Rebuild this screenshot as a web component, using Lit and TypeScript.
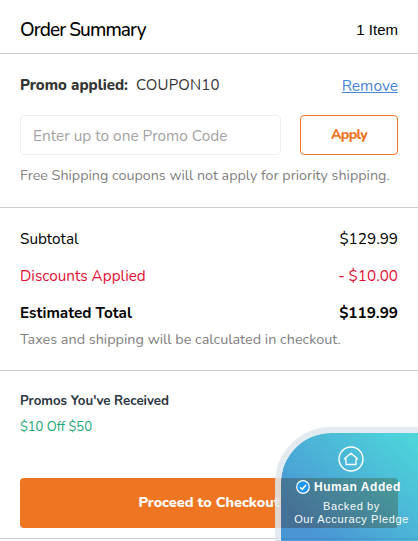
import { LitElement, html, css } from "lit";
import { customElement } from "lit/decorators.js";

@customElement("app-root")
export class AppRoot extends LitElement {
  static styles = css`
    :host { display: block; position: relative; width: 418px; height: 541px; overflow: hidden; background: #fff; font-family: "Nunito", "Lato", "Open Sans", sans-serif; color: #000; }
    .head { box-sizing: border-box; border-bottom: 1px solid #ccc; display: flex; justify-content: space-between; align-items: center; padding: 6px 20px 0; height: 54px; }
    .title { font-size: 19px; font-weight: 500; letter-spacing: -0.9px; }
    .count { font-family: "Liberation Sans", sans-serif; font-size: 15px; }
    .promo { height: 154px; box-sizing: border-box; border-bottom: 1px solid #ccc; padding: 20px 20px 0; }
    .applied { display: flex; justify-content: space-between; align-items: center; font-size: 15px; color: #333; height: 22px; }
    .applied b { font-weight: 800; margin-right: 4px; }
    .coupon { letter-spacing: 0.2px; }
    .remove { color: #4a86d8; text-decoration: underline; font-size: 15.5px; }
    .form { display: flex; justify-content: space-between; margin-top: 19px; }
    .input { width: 261px; height: 40px; box-sizing: border-box; border: 1px solid #eee; border-radius: 4px; padding: 1px 0 0 12px; display: flex; align-items: center; font-size: 15.4px; color: #a3a3a3; }
    .apply { width: 98px; height: 40px; box-sizing: border-box; border: 1px solid #ee7623; border-radius: 4px; background: #fff; color: #ee7623; font-size: 14px; font-weight: 800; letter-spacing: -0.7px; display: flex; align-items: center; justify-content: center; padding-bottom: 1px; }
    .note { font-size: 14.3px; color: #808080; margin-top: 11px; line-height: 20px; }
    .totals { height: 163px; box-sizing: border-box; border-bottom: 1px solid #ccc; padding: 20px 20px 0; }
    .row { display: flex; justify-content: space-between; align-items: center; height: 22px; font-size: 15.3px; margin-bottom: 15px; }
    .row.red { color: #e01134; }
    .row.total { font-weight: 700; margin-bottom: 5px; }
    .taxes { font-size: 14.4px; color: #808080; line-height: 20px; }
    .received { padding: 21px 20px 0; height: 107px; box-sizing: border-box; }
    .received h3 { margin: 0; font-size: 13.3px; font-weight: 700; color: #2b3440; line-height: 18px; }
    .received p { margin: 8px 0 0; font-size: 13px; color: #14a877; line-height: 18px; }
    .cta { margin: 0 20px; height: 50px; box-sizing: border-box; padding-bottom: 2px; border-radius: 4px; background: #ee7623; color: #fff; display: flex; align-items: center; justify-content: center; font-size: 14.4px; font-weight: 800; }
    .rule { border-top: 1px solid #ccc; margin-top: 10px; }
    .badge { position: absolute; left: 275px; top: 427px; width: 170px; height: 140px; box-sizing: border-box; border: 6px solid rgba(222, 232, 239, 0.85); border-radius: 56px 0 0 0; background: linear-gradient(222deg, rgba(8, 210, 205, 0.72), rgba(5, 110, 195, 0.72) 78%); background-clip: padding-box; font-family: "Liberation Sans", sans-serif; color: #fff; }
    .home { position: absolute; left: 57px; top: 13px; }
    .human { position: absolute; left: 15px; top: 47px; display: flex; align-items: center; gap: 4px; font-size: 12px; font-weight: 700; letter-spacing: 0.55px; white-space: nowrap; }
    .backed { position: absolute; left: 0; width: 141px; top: 67px; text-align: center; font-size: 11px; line-height: 13px; letter-spacing: 0.6px; white-space: nowrap; color: #f6fafb; }
  `;

  render() {
    return html`
      <div class="head"><span class="title">Order Summary</span><span class="count">1 Item</span></div>
      <div class="promo">
        <div class="applied"><span><b>Promo applied:</b> <span class="coupon">COUPON10</span></span><span class="remove">Remove</span></div>
        <div class="form"><div class="input">Enter up to one Promo Code</div><div class="apply">Apply</div></div>
        <div class="note">Free Shipping coupons will not apply for priority shipping.</div>
      </div>
      <div class="totals">
        <div class="row"><span>Subtotal</span><span>$129.99</span></div>
        <div class="row red"><span>Discounts Applied</span><span>- $10.00</span></div>
        <div class="row total"><span>Estimated Total</span><span>$119.99</span></div>
        <div class="taxes">Taxes and shipping will be calculated in checkout.</div>
      </div>
      <div class="received"><h3>Promos You've Received</h3><p>$10 Off $50</p></div>
      <div class="cta">Proceed to Checkout</div>
      <div class="rule"></div>
      <div class="badge">
        <svg class="home" width="26" height="26" viewBox="0 0 26 26" fill="none" stroke="#fff">
          <circle cx="13" cy="13" r="12" stroke-width="1.4"/>
          <path d="M6.5 12.8 L13 7.2 L19.5 12.8 L18 13.2 V18.5 H8 V13.2 Z" stroke-width="1.3" stroke-linejoin="round"/>
        </svg>
        <div class="human">
          <svg width="14" height="14" viewBox="0 0 14 14"><circle cx="7" cy="7" r="6.3" fill="#1e96f5" stroke="#fff" stroke-width="1.2"/><path d="M4 7.2 L6.2 9.3 L10 5" fill="none" stroke="#fff" stroke-width="1.5"/></svg>
          <span>Human Added</span>
        </div>
        <div class="backed">Backed by<br />Our Accuracy Pledge</div>
      </div>
    `;
  }
}
